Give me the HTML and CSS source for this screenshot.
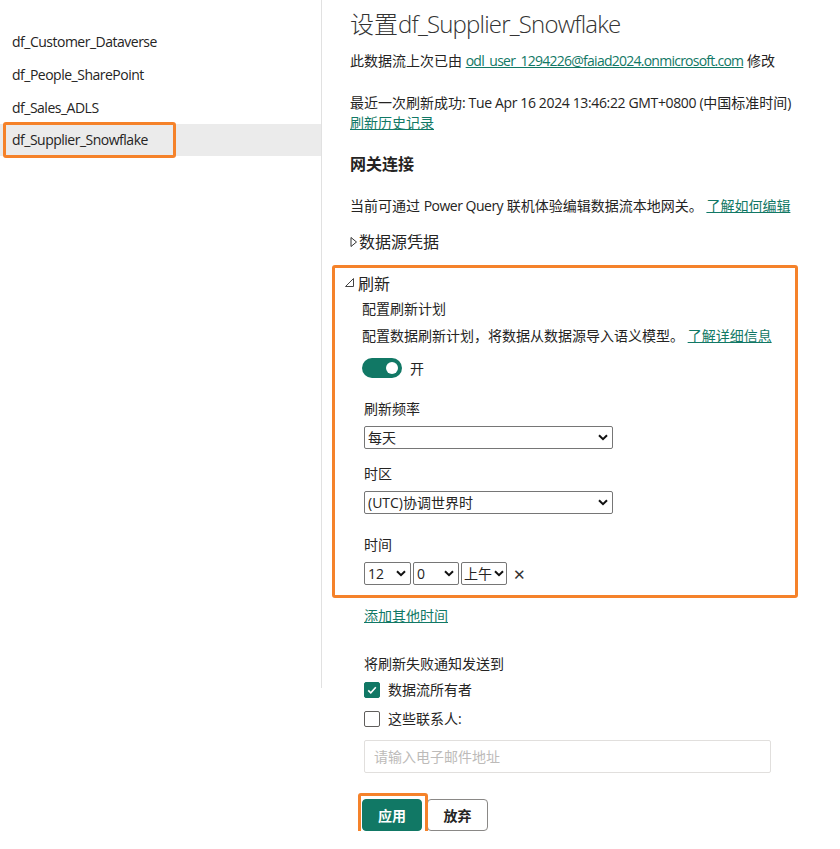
FILE: index.html
```html
<!DOCTYPE html>
<html lang="zh-CN">
<head>
<meta charset="utf-8">
<title>设置</title>
<link rel="stylesheet" href="styles.css">
</head>
<body>
<div class="page">
  <aside class="sidebar">
    <div class="item">df_Customer_Dataverse</div>
    <div class="item">df_People_SharePoint</div>
    <div class="item">df_Sales_ADLS</div>
    <div class="item selected"><span class="mark"></span>df_Supplier_Snowflake</div>
  </aside>
  <main class="main">
    <h1 class="title">设置<span class="lat-t">df_Supplier_Snowflake</span></h1>
    <p class="modified">此数据流上次已由 <a class="link lat-e" href="#">odl_user_1294226@faiad2024.onmicrosoft.com</a> 修改</p>
    <p class="last">最近一次刷新成功<span class="lat-d">: Tue Apr 16 2024 13:46:22 GMT+0800 (</span>中国标准时间<span class="lat-d">)</span><br><a class="link" href="#">刷新历史记录</a></p>
    <h2 class="section">网关连接</h2>
    <p class="desc">当前可通过 <span class="lat">Power Query</span> 联机体验编辑数据流本地网关。 <a class="link" href="#">了解如何编辑</a></p>
    <div class="collapse"><svg class="tri" width="8" height="12" viewBox="0 0 8 12"><path d="M1 1.5 L6.5 6 L1 10.5 Z" fill="none" stroke="#333" stroke-width="1"/></svg>数据源凭据</div>

    <section class="refresh">
      <div class="expand"><svg class="tri2" width="9" height="9" viewBox="0 0 9 9"><path d="M0.5 8.5 L8.5 8.5 L8.5 0.5 Z" fill="none" stroke="#444" stroke-width="1"/></svg>刷新</div>
      <div class="inner">
        <div class="sub">配置刷新计划</div>
        <div class="sub desc2">配置数据刷新计划，将数据从数据源导入语义模型。 <a class="link" href="#">了解详细信息</a></div>
        <div class="toggle-row"><span class="toggle"><span class="knob"></span></span><span class="on">开</span></div>
        <div class="fields">
          <label class="lbl">刷新频率</label>
          <span class="selwrap wide"><select class="sel"><option>每天</option></select><svg class="chev" width="10" height="7" viewBox="0 0 10 7"><path d="M1 1.2 L5 5.2 L9 1.2" fill="none" stroke="#111" stroke-width="2"/></svg></span>
          <label class="lbl lbl2">时区</label>
          <span class="selwrap wide"><select class="sel"><option>(UTC)协调世界时</option></select><svg class="chev" width="10" height="7" viewBox="0 0 10 7"><path d="M1 1.2 L5 5.2 L9 1.2" fill="none" stroke="#111" stroke-width="2"/></svg></span>
          <label class="lbl lbl3">时间</label>
          <div class="time-row">
            <span class="selwrap t1"><select class="sel"><option>12</option></select><svg class="chev" width="10" height="7" viewBox="0 0 10 7"><path d="M1 1.2 L5 5.2 L9 1.2" fill="none" stroke="#111" stroke-width="2"/></svg></span>
            <span class="selwrap t2"><select class="sel"><option>0</option></select><svg class="chev" width="10" height="7" viewBox="0 0 10 7"><path d="M1 1.2 L5 5.2 L9 1.2" fill="none" stroke="#111" stroke-width="2"/></svg></span>
            <span class="selwrap t3"><select class="sel"><option>上午</option></select><svg class="chev" width="10" height="7" viewBox="0 0 10 7"><path d="M1 1.2 L5 5.2 L9 1.2" fill="none" stroke="#111" stroke-width="2"/></svg></span>
            <span class="x">✕</span>
          </div>
        </div>
      </div>
    </section>

    <div class="after">
      <a class="link add" href="#">添加其他时间</a>
      <div class="notify">将刷新失败通知发送到</div>
      <div class="check-row first"><span class="cb checked"><svg width="12" height="12" viewBox="0 0 12 12"><path d="M2.2 6.3 L4.8 8.8 L9.8 3.2" fill="none" stroke="#fff" stroke-width="1.6"/></svg></span>数据流所有者</div>
      <div class="check-row second"><span class="cb"></span>这些联系人:</div>
      <input class="email" type="text" placeholder="请输入电子邮件地址">
    </div>

    <div class="buttons">
      <span class="apply-wrap"><span class="mark2"></span><button class="btn primary">应用</button></span>
      <button class="btn secondary">放弃</button>
    </div>
  </main>
</div>
</body>
</html>
```

FILE: styles.css
```css
* { box-sizing: border-box; }
html, body { margin: 0; padding: 0; background: #fff; }
body {
  font-family: "Segoe UI", "Open Sans", "Noto Sans CJK SC", sans-serif;
  font-size: 14px;
  color: #252423;
}
.lat { letter-spacing: -0.5px; }
.lat-t { letter-spacing: -0.8px; }
.lat-e { letter-spacing: -0.75px; }
.lat-d { letter-spacing: -0.36px; }
.page { display: flex; align-items: flex-start; }
.sidebar {
  width: 322px;
  height: 688px;
  border-right: 1px solid #e1e1e1;
  padding-top: 25px;
  flex: none;
}
.item {
  position: relative;
  height: 33px;
  line-height: 33px;
  padding-left: 12px;
  white-space: nowrap;
  letter-spacing: -0.5px;
}
.item.selected { background: #ebebeb; height: 32px; line-height: 32px; }
.mark {
  position: absolute;
  left: 3px; top: -2px;
  width: 173px; height: 36px;
  border: 3px solid #f5822a;
  border-radius: 3px;
}
.main { flex: 1; padding: 8px 0 0 28px; }
.title {
  margin: 0;
  font-size: 24px;
  line-height: 32px;
  font-weight: 300;
  color: #333;
}
p { margin: 0; line-height: 20px; }
.modified { margin-top: 11px; }
.last { margin-top: 22px; }
.link { color: #117865; text-decoration: underline; }
.section { margin: 19px 0 0; font-size: 16px; line-height: 24px; font-weight: 700; }
.desc { margin-top: 20px; }
.collapse { margin-top: 14px; font-size: 16px; line-height: 24px; display: flex; align-items: center; }
.tri { margin-right: 1px; }
.refresh {
  margin: 11px 0 0 -18px;
  width: 466px;
  border: 3px solid #f5822a;
  border-radius: 3px;
  padding: 4px 0 10px 10px;
}
.expand { font-size: 16px; line-height: 24px; display: flex; align-items: center; }
.tri2 { margin: 0 4px 3px 0; }
.inner { padding-left: 17px; }
.sub { line-height: 20px; margin-top: 3px; }
.desc2 { margin-top: 7px; }
.toggle-row { margin-top: 12px; display: flex; align-items: center; height: 20px; }
.toggle {
  width: 40px; height: 20px;
  border-radius: 10px;
  background: #117865;
  position: relative;
  display: inline-block;
}
.knob {
  position: absolute;
  right: 4px; top: 4px;
  width: 12px; height: 12px;
  border-radius: 50%;
  background: #fff;
}
.on { margin-left: 8px; }
.fields { padding-left: 2px; margin-top: 21px; display: flex; flex-direction: column; align-items: flex-start; }
.lbl { line-height: 20px; }
.lbl2 { margin-top: 15px; }
.lbl3 { margin-top: 21px; }
.selwrap { position: relative; display: inline-block; margin-top: 7px; height: 23px; }
.selwrap.wide { width: 249px; }
.sel {
  -webkit-appearance: none;
  appearance: none;
  width: 100%;
  height: 23px;
  font-family: inherit;
  font-size: 14px;
  color: #252423;
  border: 1px solid #767676;
  border-radius: 2px;
  background: #fff;
  padding: 0 18px 0 3px;
  display: block;
}
.chev { position: absolute; right: 5px; top: 8px; pointer-events: none; }
.time-row { display: flex; align-items: center; gap: 2px; margin-top: 7px; }
.time-row .selwrap { margin-top: 0; }
.t1 { width: 47px; }
.t2 { width: 46px; }
.t3 { width: 46px; }
.t3 .sel { padding-left: 2px; padding-right: 14px; }
.t3 .chev { right: 3px; }
.x { margin-left: 4px; font-size: 15px; color: #333; line-height: 20px; }
.after { padding-left: 14px; display: flex; flex-direction: column; align-items: flex-start; }
.add { margin-top: 8px; line-height: 20px; }
.notify { margin-top: 28px; line-height: 20px; }
.check-row { display: flex; align-items: center; line-height: 20px; }
.check-row.first { margin-top: 6px; }
.check-row.second { margin-top: 9px; }
.cb {
  width: 16px; height: 16px;
  border: 1px solid #605e5c;
  border-radius: 2px;
  margin-right: 8px;
  display: inline-flex;
  align-items: center;
  justify-content: center;
}
.cb.checked { background: #117865; border-color: #117865; }
.email {
  margin-top: 11px;
  width: 407px;
  height: 33px;
  border: 1px solid #e1dfdd;
  border-radius: 2px;
  padding: 0 9px;
  font-family: inherit;
  font-size: 14px;
}
.email::placeholder { color: #bdbbb9; }
.buttons { margin-top: 26px; padding-left: 12px; display: flex; gap: 5px; }
.apply-wrap { position: relative; display: inline-block; }
.mark2 {
  position: absolute;
  left: -4px; top: -6px;
  width: 70px; height: 44px;
  border: 3px solid #f5822a;
  border-radius: 3px;
}
.btn {
  height: 32px;
  font-family: inherit;
  font-size: 14px;
  font-weight: 700;
  border-radius: 4px;
  cursor: pointer;
}
.primary { width: 60px; background: #117865; color: #fff; border: 1px solid #117865; position: relative; }
.secondary { width: 61px; background: #fff; color: #252423; border: 1px solid #8a8886; }
```
